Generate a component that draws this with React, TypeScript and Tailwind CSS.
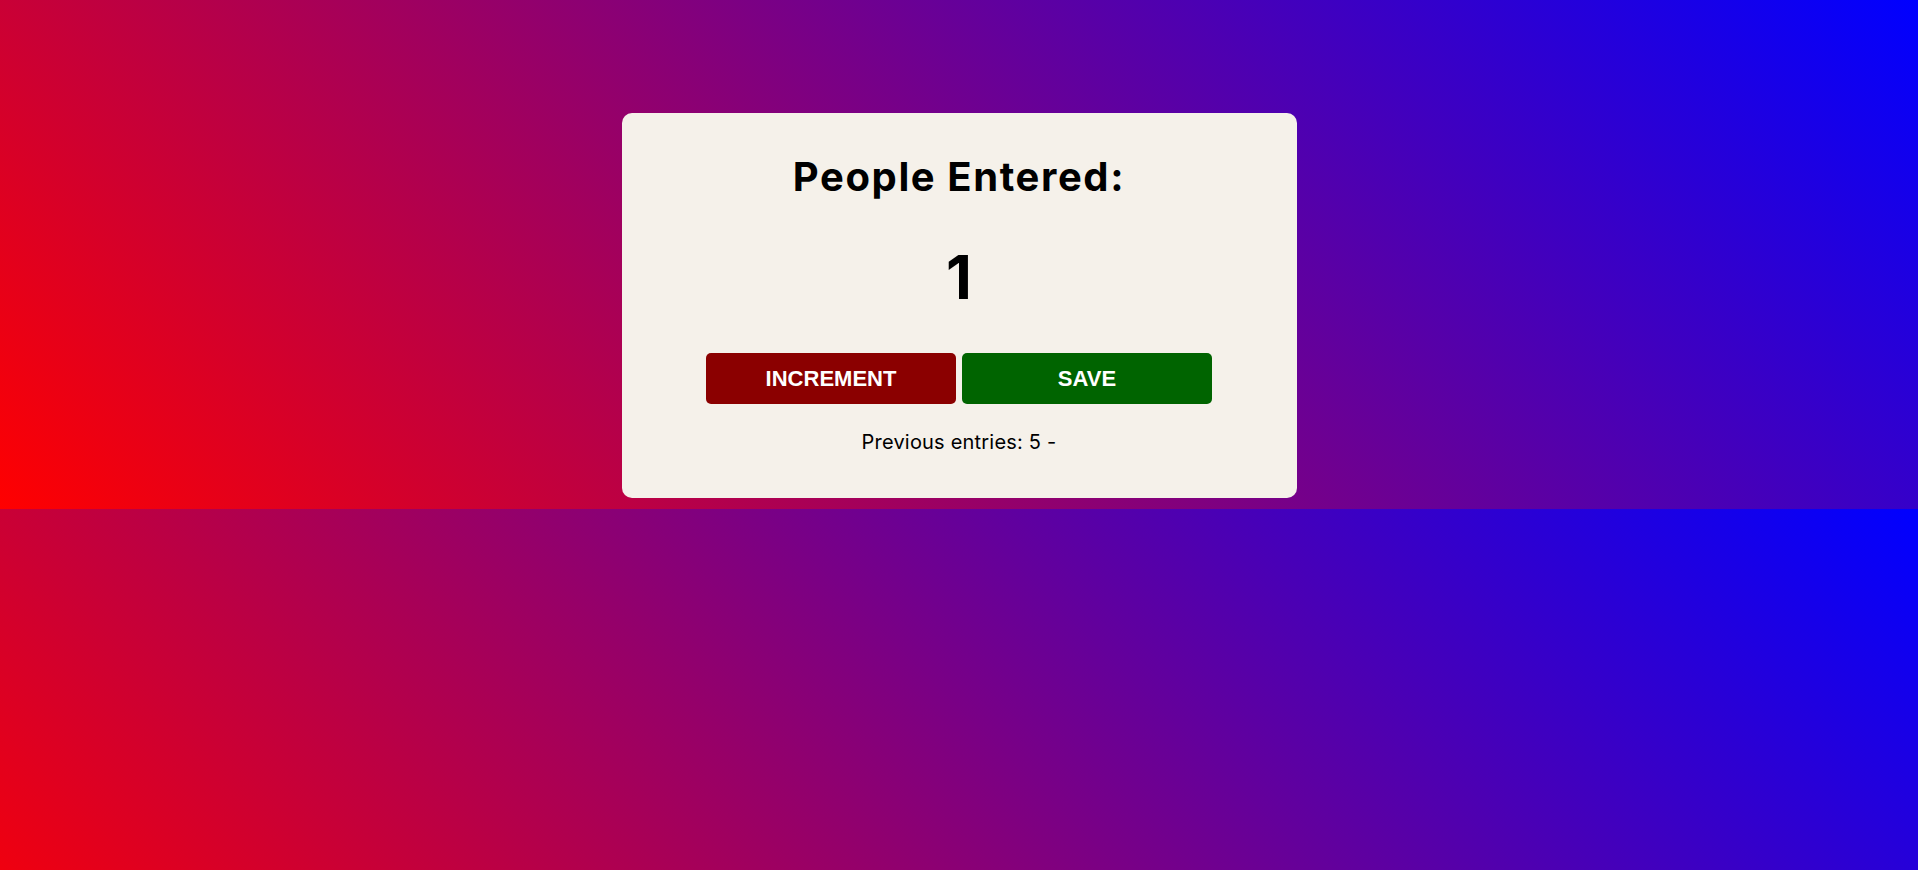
import { useState } from "react";

export default function App() {
  const [count, setCount] = useState(1);
  const [entries, setEntries] = useState<number[]>([5]);

  const save = () => {
    setEntries([...entries, count]);
    setCount(0);
  };

  return (
    <div className="min-h-[870px] w-full bg-[linear-gradient(45deg,#ff0000,#0000ff)] bg-[length:100%_509px] bg-repeat pt-[113px] font-['Inter',sans-serif]">
      {/* Карточка */}
      <div className="mx-auto w-[675px] rounded-[10px] bg-[#f5f1ea] pt-[40px] pb-[44px] flex flex-col items-center">
        <h1 className="text-[40px] leading-[48px] font-bold tracking-[1.6px] text-black">
          People Entered:
        </h1>

        <div className="mt-[40px] text-[60px] leading-[72px] font-bold text-black">
          {count}
        </div>

        <div className="mt-[40px] flex gap-[6px]">
          <button
            onClick={() => setCount(count + 1)}
            className="w-[250px] h-[51px] rounded-[5px] bg-[#8b0000] text-white text-[22px] font-bold font-['Liberation_Sans',Arial,sans-serif]"
          >
            INCREMENT
          </button>
          <button
            onClick={save}
            className="w-[250px] h-[51px] rounded-[5px] bg-[#006400] text-white text-[22px] font-bold font-['Liberation_Sans',Arial,sans-serif]"
          >
            SAVE
          </button>
        </div>

        <p className="mt-[26px] text-[20px] leading-[24px] tracking-[0.2px] text-black">
          Previous entries: {entries.map((e) => `${e} - `).join("")}
        </p>
      </div>
    </div>
  );
}
